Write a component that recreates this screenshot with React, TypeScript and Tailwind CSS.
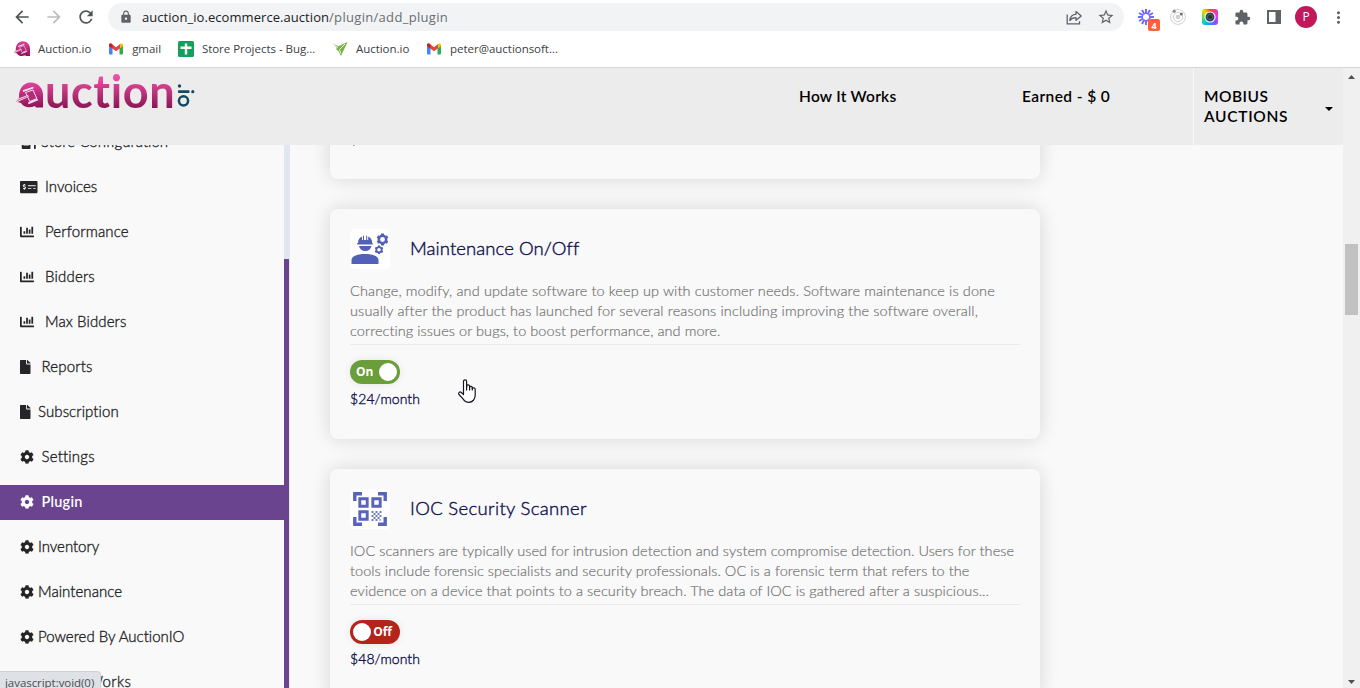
import type { ReactNode } from "react";
import { FaStoreAlt, FaMoneyCheckAlt, FaChartBar, FaFile, FaCog } from "react-icons/fa";
import { MdArrowBack, MdArrowForward, MdRefresh, MdLock, MdStarBorder, MdExtension, MdMoreVert } from "react-icons/md";

const AuctionMark = () => (
  <svg viewBox="0 0 27 27" className="h-full w-full">
    <defs>
      <linearGradient id="mark" x1="0" y1="0" x2="0" y2="1">
        <stop offset="0" stopColor="#e2429c" />
        <stop offset="1" stopColor="#8f1457" />
      </linearGradient>
    </defs>
    <path d="M14.5.5C22 .5 27 6 27 13v12.500h-7l-1-1.500c-5.500 2.500-11 1.500-14-3L0 19.500 3 15.500c-.5-8.500 4.500-15 11.500-15Z" fill="url(#mark)" />
    <path d="M9.500 10.500 17 8l3.800 8.500-7 3Z" fill="#b82a7a" stroke="#f4e4ee" strokeWidth="1" />
    <path d="M7 9.200 17.500 5.500M12.300 21.300 21.800 17.500" stroke="#f4e4ee" strokeWidth="1.800" />
    <path d="M-.5 17.300 12 13l.8 1.800L1 20.200Z" fill="#f4e4ee" />
    <path d="M1 18.500 11.500 14.400" stroke="#b82a7a" strokeWidth=".7" />
  </svg>
);

const Gmail = () => (
  <svg viewBox="0 0 16 16" className="size-4">
    <path d="M1 4.500V12.500a1 1 0 0 0 1 1h2.500V7Z" fill="#4285f4" />
    <path d="M15 4.500V12.500a1 1 0 0 1-1 1h-2.500V7Z" fill="#34a853" />
    <path d="M11.500 3.700V7.500L15 5V4c0-1.500-1.500-2-2.500-1.200Z" fill="#fbbc04" />
    <path d="M1 5V4c0-1.500 1.500-2 2.500-1.200L8 6.200l4-3v4.100L8 10.200Z" fill="#ea4335" />
    <path d="M1 4c0-1.500 1.500-2 2.500-1.200l1 .8v4L1 5Z" fill="#c5221f" />
  </svg>
);

const Sheets = () => (
  <svg viewBox="0 0 16 16" className="size-4">
    <rect width="16" height="16" rx="1.500" fill="#12a05c" />
    <path d="M2.500 6.700h11M8 2.500v11" stroke="#fff" strokeWidth="2.400" />
  </svg>
);

const GreenArrow = () => (
  <svg viewBox="0 0 16 16" className="size-4">
    <path d="M.5 2 6.500 5.200 15.500 1 9 15 6.200 9.800 4 8.200 5 7Z" fill="#77b043" />
    <path d="m13 3-5.500 5.500 1.200 4M1 2l5 4.500" stroke="#eef7e6" strokeWidth="1" fill="none" />
  </svg>
);

const bookmarks: { label: string; icon: ReactNode }[] = [
  { label: "Auction.io", icon: <AuctionMark /> },
  { label: "gmail", icon: <Gmail /> },
  { label: "Store Projects - Bug...", icon: <Sheets /> },
  { label: "Auction.io", icon: <GreenArrow /> },
  { label: "peter@auctionsoft...", icon: <Gmail /> },
];

const rayAngles = [0, 30, 60, 90, 120, 150, 180, 210, 240, 270, 300, 330];

function BrowserBar() {
  return (
    <div className="flex h-[68px] flex-col border-b border-[#d5d8d9] bg-white font-['Open_Sans',sans-serif] text-[#3c4043]">
      <div className="flex h-[34px] shrink-0 items-center pl-[6px] text-[#5f6368]">
        <div className="grid w-8 place-items-center text-[#505357]"><MdArrowBack size={20} /></div>
        <div className="grid w-8 place-items-center text-[#babcbe]"><MdArrowForward size={20} /></div>
        <div className="grid w-8 place-items-center text-[#505357]"><MdRefresh size={20} /></div>
        <div className="ml-[6px] flex h-7 w-[1016px] items-center rounded-full bg-[#f1f3f4] pl-[11px] pr-[2px] text-[13px] leading-none">
          <MdLock size={14} />
          <span className="ml-[9px] tracking-[0.057px] text-[#202124]">auction_io.ecommerce.auction</span>
          <span className="tracking-[0.31px] text-[#6a6e72]">/plugin/add_plugin</span>
          <div className="ml-auto grid w-8 place-items-center">
            <svg viewBox="0 0 16 16" className="size-4" fill="none" stroke="currentColor" strokeWidth="1.300">
              <path d="M1.200 5.500v9.300h12.300v-2.600" />
              <path d="M3.800 11.500c.4-4 2.700-6.200 6.200-6.200V2.600l5.200 4.400-5.200 4.300V8.600c-2.700 0-4.700.8-6.200 2.900Z" strokeLinejoin="round" />
            </svg>
          </div>
          <div className="grid w-8 place-items-center"><MdStarBorder size={18} /></div>
        </div>
        <div className="ml-[6px] grid w-8 place-items-center">
          <div className="relative size-4">
            <svg viewBox="0 0 16 16" className="size-4" stroke="#6b63ff" strokeWidth="1.900">
              {rayAngles.map((a) => <path key={a} d="M8 0v5" transform={`rotate(${a} 8 8)`} />)}
            </svg>
            <span className="absolute left-[10px] top-[10px] grid h-3 w-3 place-items-center rounded-[2px] bg-[#ff5f3b] text-[9px] font-bold leading-none text-white">4</span>
          </div>
        </div>
        <div className="grid w-8 place-items-center">
          <svg viewBox="0 0 16 16" className="size-4" fill="none">
            <circle cx="8" cy="8" r="7.400" stroke="#d2d2d2" />
            <circle cx="8" cy="8" r="4.600" stroke="#cfcfcf" />
            <circle cx="8" cy="8" r="2.300" fill="#d0d0d0" />
            <circle cx="4.200" cy="2.200" r="1.600" fill="#8a8a8a" />
            <circle cx="11.300" cy="5" r="1.600" fill="#777" />
          </svg>
        </div>
        <div className="grid w-8 place-items-center">
          <div className="grid size-4 place-items-center rounded-[3px] bg-[conic-gradient(#ff4b2b,#ff2fa0,#e83cf0,#8a4dff,#2f8cff,#00cfd0,#5fe04a,#ffd000,#ff4b2b)]">
            <svg viewBox="0 0 12 12" className="size-3">
              <circle cx="6" cy="6" r="5" fill="#2d3f4d" stroke="#fff" strokeWidth="1.100" />
              <circle cx="6" cy="6" r="2.600" fill="#26323c" stroke="#56707f" strokeWidth=".8" />
            </svg>
          </div>
        </div>
        <div className="grid w-8 place-items-center"><MdExtension size={17} /></div>
        <div className="grid w-8 place-items-center">
          <svg viewBox="0 0 14 14" className="size-[14px]"><path d="M0 0h14v14H0ZM2 2v10h6.500V2Z" fill="currentColor" fillRule="evenodd" /></svg>
        </div>
        <div className="grid w-8 place-items-center">
          <div className="grid size-[22px] place-items-center rounded-full bg-[#c2185b] text-[12px] leading-none text-white">P</div>
        </div>
        <div className="grid w-8 place-items-center"><MdMoreVert size={19} /></div>
      </div>
      <div className="flex flex-1 items-center gap-[16.800px] pb-[3px] pl-[14px]">
        {bookmarks.map((b, i) => (
          <div key={i} className="flex items-center gap-2">
            <div className="size-4">{b.icon}</div>
            <span className="text-[11.500px] leading-4 tracking-[-0.03px]">{b.label}</span>
          </div>
        ))}
      </div>
    </div>
  );
}

function Header() {
  return (
    <header className="flex h-[77px] shrink-0 bg-[#ececec] text-[15.500px] font-semibold leading-5 text-black">
      <div className="flex w-[783px] pl-4 pt-[4px]">
        <div className="mt-[10px] h-[27px] w-[27px]"><AuctionMark /></div>
        <span className="-mt-[6px] ml-[2px] h-[52px] bg-linear-to-b from-[#f04fa8] from-20% to-[#86114f] to-85% bg-clip-text text-[45px] font-bold leading-[50px] tracking-[0.65px] text-transparent">uction</span>
        <svg viewBox="0 0 18 26" className="ml-[2px] mt-[12px] h-[26px] w-[18px]" fill="#0f4a63">
          <circle cx="2.500" cy="2" r="1.700" />
          <rect x="1" y="6.300" width="11.500" height="2.800" rx=".8" />
          <circle cx="15.800" cy="7.700" r="1.600" />
          <circle cx="6.500" cy="16.800" r="4.600" fill="none" stroke="#0f4a63" strokeWidth="2.500" />
        </svg>
      </div>
      <div className="w-[223px] pl-4 pt-[18px] tracking-[0.24px]">How It Works</div>
      <div className="w-[187px] pl-4 pt-[18px] tracking-[0.4px]">Earned - $ 0</div>
      <div className="flex flex-1 items-start justify-between border-l border-[#f8f8f8] pl-[10px] pr-[10px] pt-[18px]">
        <div>
          <div className="tracking-[0.5px]">MOBIUS</div>
          <div className="tracking-[0.7px]">AUCTIONS</div>
        </div>
        <svg viewBox="0 0 8 4" className="mt-[21px] h-1 w-2"><path d="M0 0h8L4 4Z" /></svg>
      </div>
    </header>
  );
}

const menu: { label: string; icon: ReactNode; gap: string; track: string; active?: boolean }[] = [
  { label: "Store Configuration", icon: <FaStoreAlt className="h-[14px] w-[17.500px]" />, gap: "gap-[3.500px]", track: "tracking-[0.05px]" },
  { label: "Invoices", icon: <FaMoneyCheckAlt className="h-[14px] w-[17.500px]" />, gap: "gap-[7.500px]", track: "tracking-[0.02px]" },
  { label: "Performance", icon: <FaChartBar size={14} />, gap: "gap-[11px]", track: "tracking-[0.15px]" },
  { label: "Bidders", icon: <FaChartBar size={14} />, gap: "gap-[11px]", track: "tracking-[0.18px]" },
  { label: "Max Bidders", icon: <FaChartBar size={14} />, gap: "gap-[11px]", track: "tracking-[0.1px]" },
  { label: "Reports", icon: <FaFile className="h-[14px] w-[10.500px]" />, gap: "gap-[11px]", track: "tracking-[0.16px]" },
  { label: "Subscription", icon: <FaFile className="h-[14px] w-[10.500px]" />, gap: "gap-[7.500px]", track: "tracking-[0.09px]" },
  { label: "Settings", icon: <FaCog size={14} />, gap: "gap-[7.500px]", track: "tracking-[0.2px]" },
  { label: "Plugin", icon: <FaCog size={14} />, gap: "gap-[7.500px]", track: "tracking-[0.201px]", active: true },
  { label: "Inventory", icon: <FaCog size={14} />, gap: "gap-[4px]", track: "tracking-[-0.04px]" },
  { label: "Maintenance", icon: <FaCog size={14} />, gap: "gap-[4px]", track: "tracking-[0.05px]" },
  { label: "Powered By AuctionIO", icon: <FaCog size={14} />, gap: "gap-[4px]", track: "tracking-[0px]" },
  { label: "How It Works", icon: <FaCog size={14} />, gap: "gap-[4px]", track: "tracking-[0.36px]" },
];

function Sidebar() {
  return (
    <aside className="flex w-[290px] shrink-0 overflow-hidden">
      <nav className="-mt-5 flex w-[284px] shrink-0 flex-col gap-[10px]">
        {menu.map((m) => (
          <a
            key={m.label}
            className={`flex h-[35px] shrink-0 items-center pl-5 leading-5 ${m.gap} ${m.active ? "bg-[#6b4490] text-[14.500px] font-semibold text-white" : "text-[15px] font-light text-[#252527] [-webkit-text-stroke:0.35px]"}`}
          >
            <span className="-mt-px shrink-0">{m.icon}</span>
            <span className={`whitespace-nowrap ${m.active ? "-mt-px" : "-mt-[3px]"} ${m.track}`}>{m.label}</span>
          </a>
        ))}
      </nav>
      <div className="w-[6px] bg-[#e1e6f0] pt-[114px]">
        <div className="h-full w-[5px] bg-[#6b4490]" />
      </div>
    </aside>
  );
}

const Gear = ({ cx, cy, r }: { cx: number; cy: number; r: number }) => (
  <g stroke="#5360b8" fill="none">
    <circle cx={cx} cy={cy} r={r * 0.62} strokeWidth={r * 0.42} />
    {[0, 60, 120].map((a) => (
      <g key={a} transform={`rotate(${a} ${cx} ${cy})`} strokeWidth={r * 0.5}>
        <path d={`M${cx} ${cy - r}v${r * 0.35}M${cx} ${cy + r}v${-r * 0.35}`} />
      </g>
    ))}
  </g>
);

const WorkerIcon = () => (
  <svg viewBox="0 0 40 40" className="size-10 rounded-[5px] bg-white" fill="#5360b8">
    <path d="M8 14c0-3.500 1.800-5.700 4-6.600V11h1V6.900l1-.3V11h2.200V6.600l1 .3V11h1V7.400c2.300 1 4 3.100 4 6.600h.5v1.500H7.200V14Z" />
    <path d="M9 17h12.500c-.6 3-3 5-6.200 5s-5.700-2-6.300-5Z" />
    <path d="M1.500 35v-4c0-4 6.500-6 13.500-6s13.500 2 13.500 6v4Z" />
    <Gear cx={32.500} cy={10.500} r={5.900} />
    <Gear cx={29} cy={20.800} r={4.300} />
  </svg>
);

const QrIcon = () => (
  <svg viewBox="0 0 40 40" className="size-10 rounded-[5px] bg-white" fill="none" stroke="#5863ba">
    <path d="M4.800 12V4.800H12M28 4.800h7.200V12M4.800 28v7.200H12M28 35.200h7.200V28" strokeWidth="3.400" />
    <path d="M9.800 9.800h7.400v7.400H9.800ZM22.800 9.800h7.400v7.400h-7.400ZM9.800 22.800h7.400v7.400H9.800Z" strokeWidth="2.900" />
    <path d="M21.500 23h2m2 0h2m2 0h2M23.500 25h2m2 0h2M21.500 27h2m2 0h2m2 0h2M23.500 29h2m2 0h2M21.500 31h2m2 0h2m2 0h1" strokeWidth="2" opacity=".85" />
  </svg>
);

function Toggle({ on }: { on: boolean }) {
  return (
    <div
      className={`flex h-6 w-[50px] items-center justify-between rounded-full font-['Open_Sans',sans-serif] text-[12px] font-bold leading-none text-white shadow-[0_0_8px_rgba(0,0,0,0.08)] ${on ? "bg-[#6a9e3b] pl-[6px] pr-[3px]" : "flex-row-reverse bg-[#b5241b] pl-[3px] pr-[8px]"}`}
    >
      <span>{on ? "On" : "Off"}</span>
      <span className="size-[18px] rounded-full bg-white" />
    </div>
  );
}

type Plugin = { title: string; titleTrack: string; icon: ReactNode; lines: { text: string; track: string }[]; on: boolean; price: string };

const plugins: Plugin[] = [
  { title: "", titleTrack: "", icon: null, lines: [], on: false, price: "$24/month" },
  {
    title: "Maintenance On/Off",
    titleTrack: "tracking-[0.08px]",
    icon: <WorkerIcon />,
    lines: [
      { text: "Change, modify, and update software to keep up with customer needs. Software maintenance is done", track: "tracking-[0.123px]" },
      { text: "usually after the product has launched for several reasons including improving the software overall,", track: "tracking-[0.135px]" },
      { text: "correcting issues or bugs, to boost performance, and more.", track: "tracking-[0.071px]" },
    ],
    on: true,
    price: "$24/month",
  },
  {
    title: "IOC Security Scanner",
    titleTrack: "tracking-[0.34px]",
    icon: <QrIcon />,
    lines: [
      { text: "IOC scanners are typically used for intrusion detection and system compromise detection. Users for these", track: "tracking-[0.062px]" },
      { text: "tools include forensic specialists and security professionals. OC is a forensic term that refers to the", track: "tracking-[0.068px]" },
      { text: "evidence on a device that points to a security breach. The data of IOC is gathered after a suspicious...", track: "tracking-[0.087px]" },
    ],
    on: false,
    price: "$48/month",
  },
];

function PluginCard({ p }: { p: Plugin }) {
  return (
    <section className="h-[230px] w-[710px] shrink-0 rounded-lg bg-[#f9f9f9] p-5 shadow-[0_0_20px_rgba(0,0,0,0.14)]">
      <div className="flex h-10 items-center gap-5">
        {p.icon}
        <h2 className={`-mt-[2px] text-[18.500px] font-light leading-6 text-[#10104f] [-webkit-text-stroke:0.4px] ${p.titleTrack}`}>{p.title}</h2>
      </div>
      <div className="mt-3 h-[64px] border-b border-[#ebebeb] text-[14.500px] font-light leading-5 text-[#757575] [-webkit-text-stroke:0.2px]">
        {p.lines.map((l) => (
          <p key={l.text} className={`whitespace-nowrap ${l.track}`}>{l.text}</p>
        ))}
      </div>
      <div className="mt-[15px]"><Toggle on={p.on} /></div>
      <div className="mt-[5px] text-[14px] font-light leading-5 tracking-[0.082px] text-[#10104f] [-webkit-text-stroke:0.35px]">{p.price}</div>
    </section>
  );
}

export default function App() {
  return (
    <div className="relative flex h-[688px] w-[1360px] flex-col overflow-hidden bg-[#f9f9f9] font-['Lato',sans-serif] [font-variant-ligatures:none]">
      <BrowserBar />
      <div className="flex min-h-0 flex-1">
        <div className="flex w-[1343px] flex-col">
          <Header />
          <div className="flex min-h-0 flex-1 overflow-hidden">
            <Sidebar />
            <main className="flex flex-1 flex-col overflow-hidden pl-10">
              <div className="-mt-[196px] flex flex-col gap-[30px]">
                {plugins.map((p) => <PluginCard key={p.title} p={p} />)}
              </div>
            </main>
          </div>
        </div>
        <div className="flex w-[17px] flex-col items-center bg-[#f0f0f0] pb-1 pt-[7px]">
          <svg viewBox="0 0 7 4" className="h-1 w-[7px]"><path d="M0 4h7L3.500 0Z" fill="#505050" /></svg>
          <div className="mt-[165px] h-[71px] w-[13px] bg-[#c1c1c1]" />
          <svg viewBox="0 0 7 4" className="mt-auto h-1 w-[7px]"><path d="M0 0h7L3.500 4Z" fill="#505050" /></svg>
        </div>
      </div>
      <div className="absolute bottom-0 left-0 h-[17px] w-[101px] overflow-hidden rounded-tr-[4px] border-r border-t border-[#cfd2d6] bg-[#dee1e6] pl-[5px] pt-[3px] font-['Open_Sans',sans-serif] text-[11.500px] leading-4 tracking-[-0.05px] text-[#4a4d51]">
        javascript:void(0)
      </div>
      <svg viewBox="0 0 18 24" className="absolute left-[458px] top-[379px] h-6 w-[18px]" fill="#fff" stroke="#16161f" strokeWidth="1.200" strokeLinejoin="round">
        <path d="M5.500 14V2.300C5.500.3 8.600.3 8.600 2.300V8V6.800c.4-1.300 2.700-1.200 3 .3V8c.5-1 2.500-.8 2.700.5v.8c.5-.9 2.800-.6 2.900 1V16c0 4.300-2.700 7.300-6.200 7.300-3 0-4.500-1-5.800-3.200L1 15.500c-1-1.700.8-3.300 2.300-2L5.500 15.500Z" />
        <path d="M8.600 7v4.500M11.600 7.500v4M14.300 8.500v3" fill="none" />
      </svg>
    </div>
  );
}
